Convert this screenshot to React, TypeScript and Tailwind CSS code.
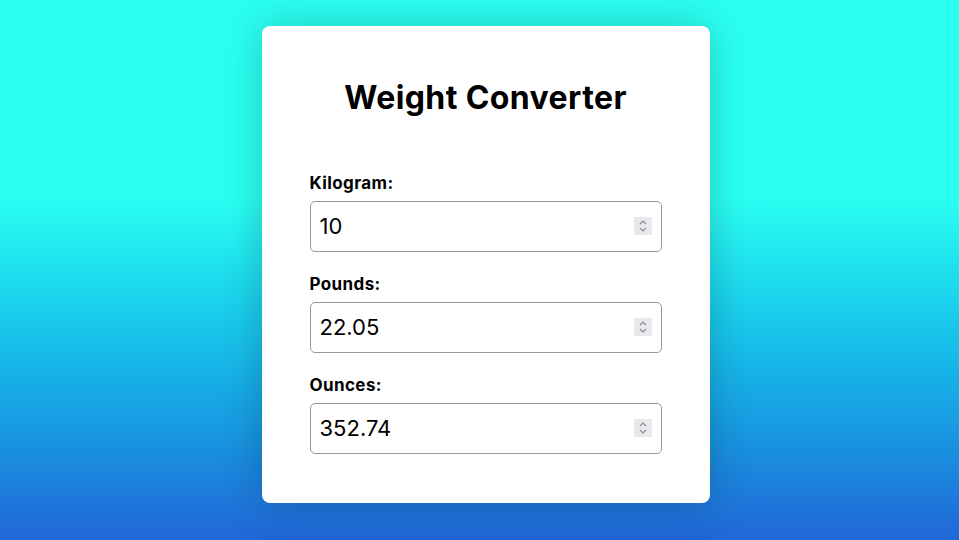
import { useState } from "react";

const fields = [
  { id: "kg", label: "Kilogram:", value: "10" },
  { id: "lb", label: "Pounds:", value: "22.05" },
  { id: "oz", label: "Ounces:", value: "352.74" },
];

function Spinner() {
  return (
    <div className="pointer-events-none absolute right-[10px] top-1/2 -translate-y-1/2 w-[18px] h-[18px] bg-[#e9e9ed] flex items-center justify-center">
      <svg width="10" height="14" viewBox="0 0 10 14" fill="none" stroke="#8a8a90" strokeWidth="1.2">
        <path d="M2 5 L5 2 L8 5" />
        <path d="M2 9 L5 12 L8 9" />
      </svg>
    </div>
  );
}

export default function App() {
  const [values, setValues] = useState<Record<string, string>>(
    Object.fromEntries(fields.map((f) => [f.id, f.value]))
  );

  return (
    <main className="min-h-screen w-full flex items-center justify-center bg-linear-to-b from-[#2afff2] from-37% to-[#2166d6] font-['Inter','Noto_Sans',sans-serif] text-black">
      <div className="ml-3 mb-3 w-[448px] bg-white rounded-lg px-12 pt-12 pb-[49px] shadow-[0_0_40px_rgba(0,0,0,0.22)]">
        <h1 className="text-center text-[32px] leading-[48px] font-bold tracking-[0.4px] mb-[49px]">
          Weight Converter
        </h1>

        <div className="flex flex-col gap-5">
          {fields.map((f) => (
            <div key={f.id} className="flex flex-col gap-1.5">
              <label htmlFor={f.id} className="text-[17px] leading-6 font-bold tracking-[0.4px]">
                {f.label}
              </label>
              <div className="relative">
                <input
                  id={f.id}
                  type="number"
                  value={values[f.id]}
                  onChange={(e) => setValues({ ...values, [f.id]: e.target.value })}
                  className="h-[51px] w-full border border-[#999] rounded-[5px] pl-[9px] pr-10 text-[22px] outline-none [appearance:textfield] [&::-webkit-inner-spin-button]:appearance-none [&::-webkit-outer-spin-button]:appearance-none"
                />
                <Spinner />
              </div>
            </div>
          ))}
        </div>
      </div>
    </main>
  );
}
